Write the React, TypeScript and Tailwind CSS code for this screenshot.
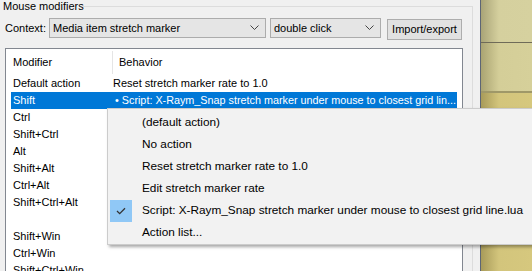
import React from "react";

// Mouse modifiers dialog with an open behaviour menu

const rows: { mod: string; beh?: string; selected?: boolean }[] = [
  { mod: "Default action", beh: "Reset stretch marker rate to 1.0" },
  { mod: "Shift", beh: "• Script: X-Raym_Snap stretch marker under mouse to closest grid lin...", selected: true },
  { mod: "Ctrl" },
  { mod: "Shift+Ctrl" },
  { mod: "Alt" },
  { mod: "Shift+Alt" },
  { mod: "Ctrl+Alt" },
  { mod: "Shift+Ctrl+Alt" },
  { mod: "" },
  { mod: "Shift+Win" },
  { mod: "Ctrl+Win" },
  { mod: "Shift+Ctrl+Win" },
];

const menuItems: { label: string; checked?: boolean }[] = [
  { label: "(default action)" },
  { label: "No action" },
  { label: "Reset stretch marker rate to 1.0" },
  { label: "Edit stretch marker rate" },
  { label: "Script: X-Raym_Snap stretch marker under mouse to closest grid line.lua", checked: true },
  { label: "Action list..." },
];

function Chevron() {
  return (
    <svg width="9" height="6" viewBox="0 0 9 6" className="shrink-0">
      <path d="M0.5 0.5 L4.5 4.5 L8.5 0.5" fill="none" stroke="#444" strokeWidth="1" />
    </svg>
  );
}

function Combo({ text, width }: { text: string; width: string }) {
  return (
    <div className={`${width} h-[20px] bg-[#e5e5e5] border border-[#acacac] flex items-center pl-[3px] pr-[6px] justify-between`}>
      <span>{text}</span>
      <Chevron />
    </div>
  );
}

export default function App() {
  return (
    <div className="w-[532px] h-[271px] overflow-hidden relative flex text-[11px] text-black font-['Liberation_Sans',Arial,sans-serif]">
      {/* dialog */}
      <div className="w-[480px] h-full bg-[#f0f0f0] relative shrink-0">
        {/* group box frame */}
        <div className="absolute left-[82px] top-[6px] w-[391px] h-px bg-[#dcdcdc]" />
        <div className="absolute left-[472px] top-[6px] w-px h-[265px] bg-[#dcdcdc]" />

        <div className="pl-[3px] pt-0 leading-[13px]">Mouse modifiers</div>

        <div className="flex items-center mt-[5px] ml-[5px] h-[20px]">
          <span className="w-[44px]">Context:</span>
          <Combo text="Media item stretch marker" width="w-[217px]" />
          <div className="w-[4px]" />
          <Combo text="double click" width="w-[111px]" />
          <div className="ml-[6px] mt-[2px] w-[75px] h-[21px] bg-[#e1e1e1] border border-[#adadad] flex items-center justify-center">
            Import/export
          </div>
        </div>

        {/* list */}
        <div className="absolute left-[5px] top-[48px] w-[458px] h-[240px] bg-white border border-[#828790] pl-[5px] overflow-hidden">
          <div className="h-[26px] flex items-center relative">
            <span className="pl-[2px] w-[102px]">Modifier</span>
            <span className="pl-[6px]">Behavior</span>
            <div className="absolute left-[101px] top-[2px] h-[23px] w-px bg-[#e5e5e5]" />
            <div className="absolute left-[451px] top-[2px] h-[23px] w-px bg-[#e5e5e5]" />
          </div>
          {rows.map((r, i) => (
            <div
              key={i}
              className={`h-[17px] w-[446px] flex items-center whitespace-nowrap overflow-hidden ${r.selected ? "bg-[#0078d7] text-white" : ""}`}
            >
              <span className="pl-[2px] w-[102px] shrink-0">{r.mod}</span>
              <span className={r.selected ? "pl-[2px] text-[10.8px]" : "pl-[0px]"}>{r.beh}</span>
            </div>
          ))}
        </div>
      </div>

      {/* window edge */}
      <div className="w-px h-full bg-[#5d6575] shrink-0" />

      {/* arrange view behind */}
      <div className="flex-1 h-full flex flex-col">
        <div className="h-[42px] bg-[linear-gradient(to_right,#a9a477,#d5d09e_18px,#d6d19f)]" />
        <div className="h-px bg-[#6f6b58]" />
        <div className="h-[48px] bg-[linear-gradient(to_right,#aaa472,#d4ce98_18px,#d6d09a)]" />
        <div className="h-[2px] bg-[#9f9868]" />
        <div className="flex-1 bg-[linear-gradient(to_right,#a89b5a,#d3c57c_18px,#d6c87e)]" />
      </div>

      {/* popup menu */}
      <div className="absolute left-[107px] top-[108px] w-[440px] h-[137px] bg-[#f2f2f2] border border-[#cccccc] shadow-[2px_2px_3px_rgba(0,0,0,0.35)] pt-[3px] text-[11.8px] whitespace-nowrap font-['Liberation_Sans',Arial,sans-serif]">
        {menuItems.map((m, i) => (
          <div key={i} className="h-[22px] flex items-center">
            <div className="w-[34px] h-[22px] flex items-center pl-[2px] shrink-0">
              {m.checked && (
                <div className="w-[22px] h-[22px] bg-[#90c8f6] flex items-center justify-center">
                  <svg width="10" height="8" viewBox="0 0 10 8">
                    <path d="M1 4 L3.7 6.7 L9 1.3" fill="none" stroke="#333" strokeWidth="1.3" />
                  </svg>
                </div>
              )}
            </div>
            <span>{m.label}</span>
          </div>
        ))}
      </div>
    </div>
  );
}
